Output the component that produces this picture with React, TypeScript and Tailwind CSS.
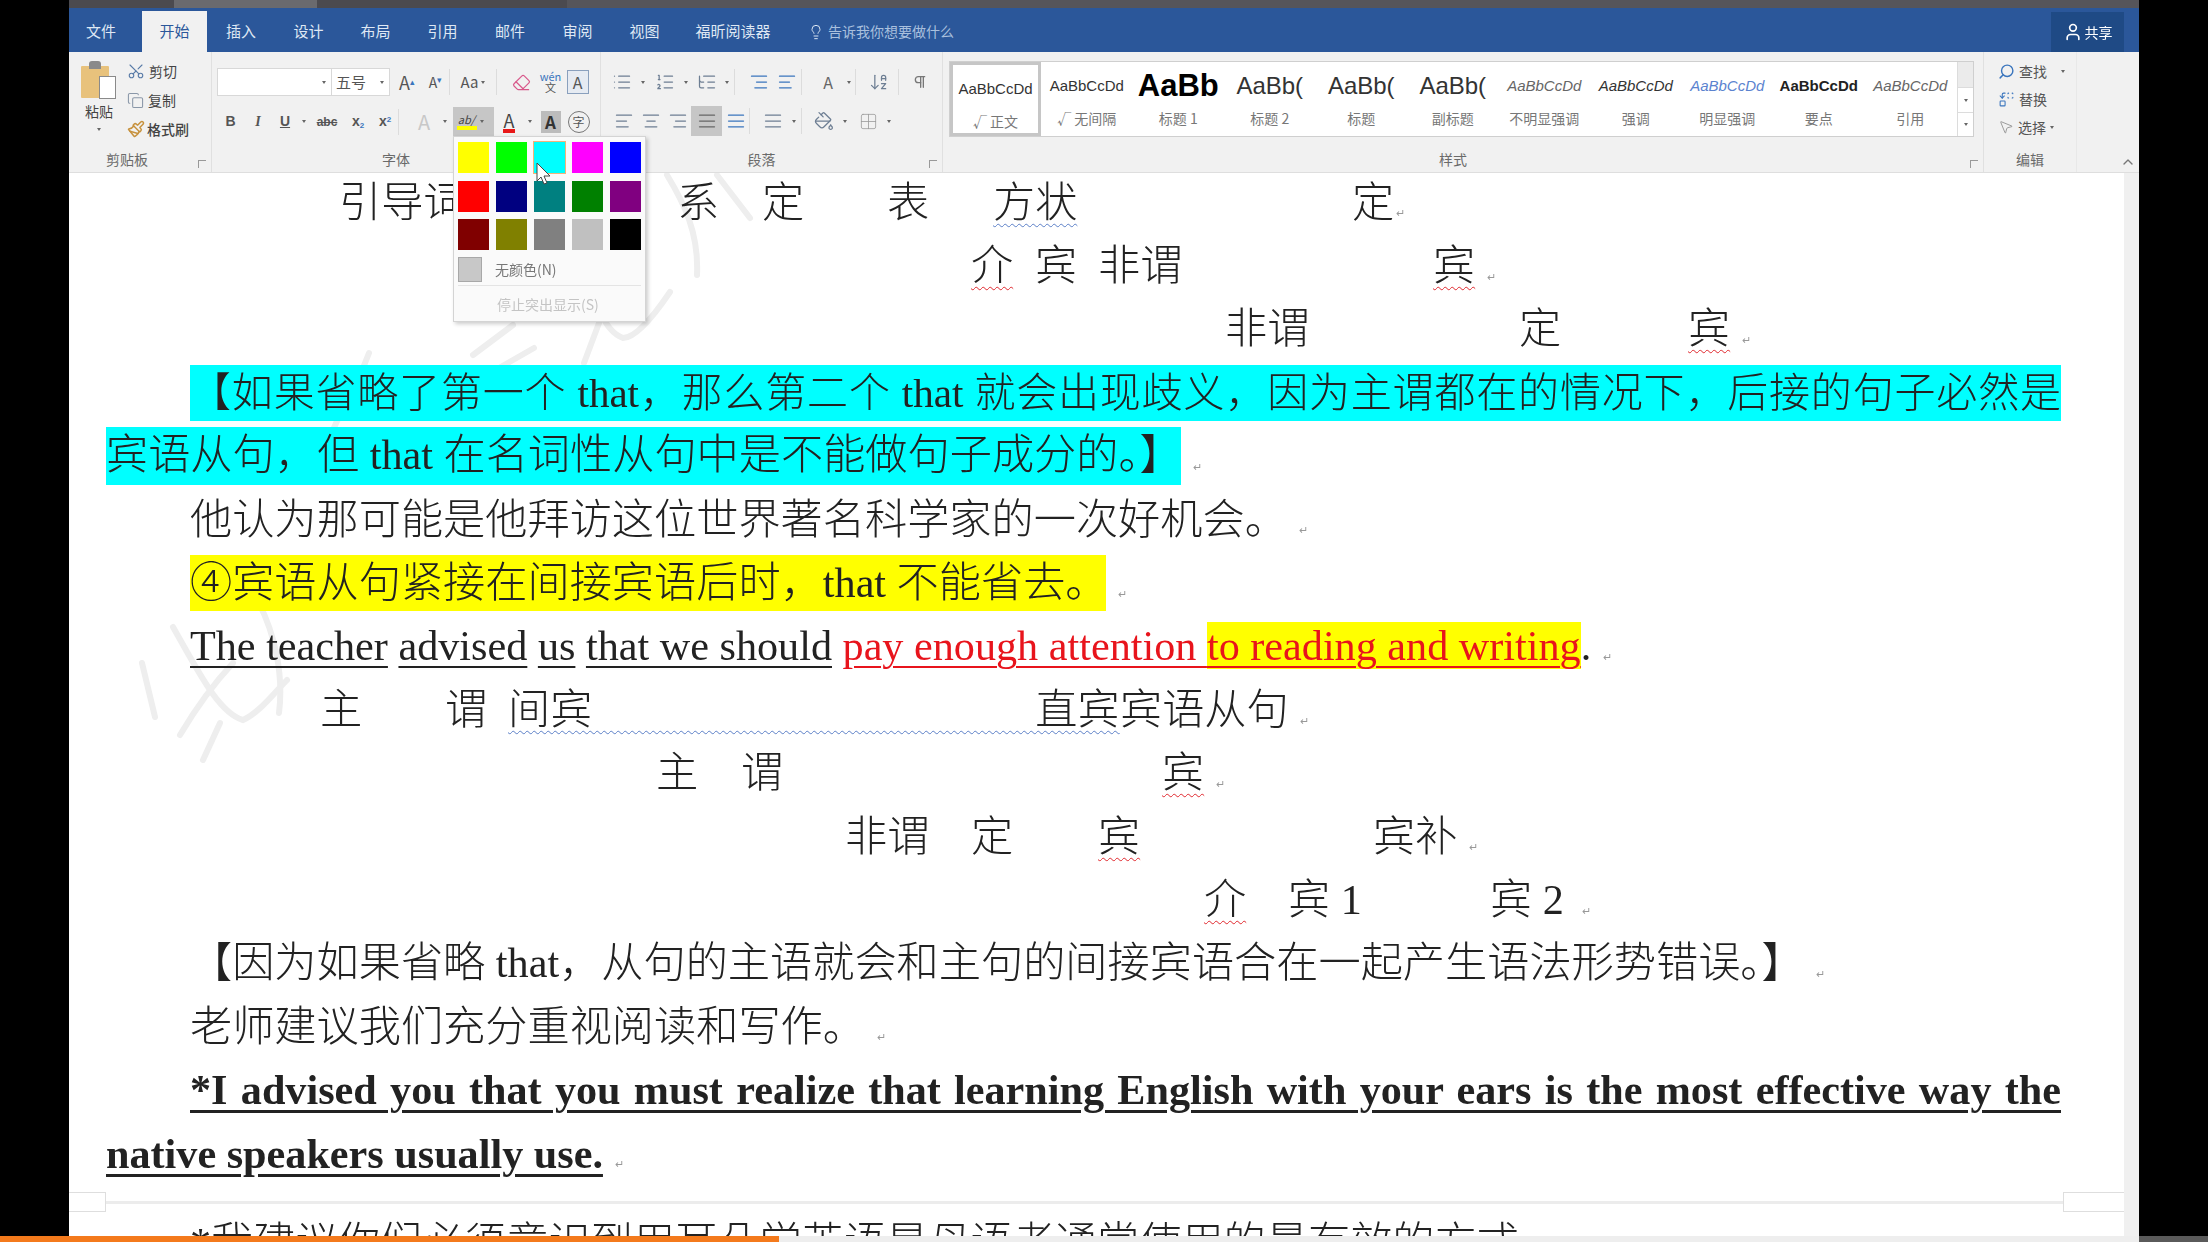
import React from "react";
import { Scissors, Copy, Paintbrush, Search, MousePointer2, ChevronUp, User, Lightbulb, List, ListOrdered, ListTree, AlignLeft, AlignCenter, AlignRight, AlignJustify, ArrowDownAZ, Pilcrow, Grid2x2, PaintBucket, Eraser, Replace } from "lucide-react";

const cjk = "font-['Liberation_Serif','Noto_Sans_CJK_SC',serif]";
const ui = "font-['Noto_Sans_CJK_SC','Liberation_Sans',sans-serif]";

const Caret = () => <span className="block w-0 h-0 border-x-[2.5px] border-x-transparent border-t-[3px] border-t-[#666] shrink-0" />;
const Sep = () => <span className="w-px h-[26px] bg-[#dcdcdc] shrink-0" />;

function Cell({ w, children, className = "" }: { w: string; children?: React.ReactNode; className?: string }) {
  return <div className={`${w} h-[28px] flex items-center justify-center shrink-0 ${className}`}>{children}</div>;
}

function GroupLabel({ children, launcher, className = "" }: { children: React.ReactNode; launcher?: boolean; className?: string }) {
  return (
    <div className={`h-[24px] mt-auto mb-[1px] flex items-center justify-center relative text-[14px] text-[#6a6a6a] ${className}`}>
      {children}
      {launcher && <span className="absolute right-[5px] bottom-[3px] w-[8px] h-[8px] border-l border-t border-[#999]" />}
    </div>
  );
}

const tabs = [["文件", "w-[73px] pr-[9px]"], ["开始", "w-[65px]"], ["插入", "w-[68px]"], ["设计", "w-[67px]"], ["布局", "w-[67px]"], ["引用", "w-[67px]"], ["邮件", "w-[68px]"], ["审阅", "w-[67px]"], ["视图", "w-[67px]"], ["福昕阅读器", "w-[110px]"]];

function TitleBar() {
  return (
    <div className={`h-[44px] bg-[#2b579a] flex items-end text-white text-[15px] ${ui}`}>
      {tabs.map(([t, w]) => (
        <div key={t} className={`${w} h-[41px] flex items-center justify-center ${t === "开始" ? "bg-[#f1f1f1] text-[#2b579a]" : "text-[#dfe8f4]"}`}>{t}</div>
      ))}
      <div className="ml-[20px] h-[41px] flex items-center gap-[4px] text-[14px] text-[#a9c0de]">
        <Lightbulb size={16} strokeWidth={1.5} className="text-[#dbe6f3]" />
        告诉我你想要做什么
      </div>
      <div className="ml-auto mr-[15px] w-[73px] h-[40px] bg-[#1f4a85] flex items-center justify-center gap-[2px] text-[14px]">
        <User size={20} strokeWidth={2} />共享
      </div>
    </div>
  );
}

function Clipboard() {
  return (
    <div className="w-[143px] flex flex-col border-r border-[#e0e0e0]">
      <div className="flex pt-[8px] text-[14px] text-[#444]">
        <div className="w-[58px] flex flex-col items-center pl-[2px] pt-[1px]">
          <div className="relative w-[36px] h-[38px]">
            <div className="absolute left-0 top-[5px] w-[28px] h-[32px] bg-[#e8c27c] rounded-[1px]" />
            <div className="absolute left-[8px] top-0 w-[12px] h-[8px] bg-[#8a8a8a] rounded-t-[3px]" />
            <div className="absolute left-[18px] top-[15px] w-[17px] h-[23px] bg-white border border-[#8a8a8a]" />
          </div>
          <div className="mt-[3px] leading-[18px]">粘贴</div>
          <div className="mt-[8px]"><Caret /></div>
        </div>
        <div className="flex flex-col gap-[9px] pt-[1px]">
          <div className="h-[20px] flex items-center gap-[4px]"><Scissors size={18} className="text-[#5a7ca8] -rotate-90" strokeWidth={1.5} />剪切</div>
          <div className="h-[20px] flex items-center gap-[4px]"><Copy size={17} className="text-[#8a97a8]" strokeWidth={1.5} />复制</div>
          <div className="h-[20px] flex items-center gap-[2px] font-medium"><Paintbrush size={18} className="text-[#c7923e]" strokeWidth={2} />格式刷</div>
        </div>
      </div>
      <GroupLabel launcher className="pr-[26px]">剪贴板</GroupLabel>
    </div>
  );
}

function FontGroup() {
  return (
    <div className="w-[389px] flex flex-col border-r border-[#e0e0e0]">
      <div className="flex items-center h-[28px] mt-[16px] pl-[5px] text-[#555]">
        <div className="w-[115px] h-[28px] bg-white border border-[#d8d8d8] flex items-center justify-end pr-[5px]"><Caret /></div>
        <div className="w-[58px] h-[28px] bg-white border border-[#d8d8d8] border-l-0 flex items-center justify-between pl-[4px] pr-[5px] text-[15px]">五号<Caret /></div>
        <Cell w="w-[30px]" className="text-[18px] ml-[2px]"><span>A<sup className="text-[9px] text-[#3a75bd]">▴</sup></span></Cell>
        <Cell w="w-[27px]" className="text-[14px]"><span>A<sup className="text-[9px] text-[#3a75bd]">▾</sup></span></Cell>
        <Sep />
        <Cell w="w-[46px]" className="text-[15px] gap-[3px]">Aa<Caret /></Cell>
        <Sep />
        <Cell w="w-[32px]" className="ml-[8px]"><Eraser size={19} strokeWidth={1.5} className="text-[#d8588a]" /></Cell>
        <Cell w="w-[27px]" className="text-[11px] leading-[11px] text-center"><span><span className="text-[#3a75bd]">wén</span><br />文</span></Cell>
        <Cell w="w-[27px]"><span className="w-[22px] h-[24px] border border-[#8aa0bd] bg-[#e6ebf2] flex items-center justify-center text-[16px] leading-none">A</span></Cell>
      </div>
      <div className="flex items-center h-[29px] mt-[11px] pl-[5px] text-[#555]">
        <Cell w="w-[27px]" className="font-bold text-[14px] font-['Liberation_Sans']">B</Cell>
        <Cell w="w-[28px]" className="italic font-bold text-[14px] font-['Liberation_Serif']">I</Cell>
        <Cell w="w-[26px]" className="font-bold text-[14px] underline font-['Liberation_Sans']">U</Cell>
        <Cell w="w-[12px]"><Caret /></Cell>
        <Cell w="w-[34px]" className="text-[12px] line-through font-bold font-['Liberation_Sans']">abc</Cell>
        <Cell w="w-[28px]" className="text-[14px] font-bold font-['Liberation_Sans']"><span>x<sub className="text-[8px] text-[#3a75bd]">2</sub></span></Cell>
        <Cell w="w-[26px]" className="text-[14px] font-bold font-['Liberation_Sans']"><span>x<sup className="text-[8px] text-[#3a75bd]">2</sup></span></Cell>
        <Sep />
        <Cell w="w-[24px]" className="text-[20px] text-[#c8c8c8] ml-[13px]">A</Cell>
        <Cell w="w-[17px]"><Caret /></Cell>
        <div className="relative w-[41px] h-[29px] bg-[#c6c6c6] flex items-center shrink-0">
          <div className="w-[27px] flex flex-col items-center">
            <span className="text-[11px] leading-[13px] text-[#444] italic">ab/</span>
            <span className="w-[20px] h-[4px] bg-[#ffff00]" />
          </div>
          <Caret />
          <div className="absolute left-0 top-full w-[193px] h-[186px] bg-[#fafafa] border border-[#d4d4d4] shadow-[2px_2px_4px_rgba(0,0,0,0.2)] z-20 px-[4px] pt-[5px] text-[14px]">
            <div className="grid grid-cols-5 gap-x-[7px] gap-y-[7.5px]">
              {["#ffff00", "#00ff00", "#00ffff", "#ff00ff", "#0000ff", "#ff0000", "#000080", "#008080", "#008000", "#800080", "#800000", "#808000", "#808080", "#c0c0c0", "#000000"].map((c, i) => (
                <div key={c} className={`relative h-[31px] ${i === 2 ? "outline outline-1 outline-[#f2b27a]" : ""}`} style={{ backgroundColor: c }}>
                  {i === 2 && <svg className="absolute left-[2px] top-[20px] z-30" width="16" height="24" viewBox="0 0 16 24"><path d="M1 1v18l4-4 3 7 3-1-3-7h6z" fill="#fff" stroke="#444" strokeWidth="1" /></svg>}
                </div>
              ))}
            </div>
            <div className="flex items-center h-[26px] mt-[6px] text-[#777] gap-[13px]">
              <span className="w-[24px] h-[25px] bg-[#c8c8c8] border border-[#a8a8a8]" />
              无颜色(N)
            </div>
            <div className="h-px bg-[#e4e4e4] mt-[3px]" />
            <div className="pl-[39px] mt-[8px] text-[#c4c4c4] leading-[20px]">停止突出显示(S)</div>
          </div>
        </div>
        <Cell w="w-[30px]"><span className="text-[18px] leading-[18px] border-b-[4px] border-[#e81818] text-[#444] px-[1px]">A</span></Cell>
        <Cell w="w-[12px]"><Caret /></Cell>
        <Cell w="w-[29px]"><span className="w-[20px] h-[22px] bg-[#bcbcbc] text-[#333] flex items-center justify-center text-[17px] font-bold">A</span></Cell>
        <Cell w="w-[27px]"><span className="w-[22px] h-[22px] rounded-full border border-[#777] flex items-center justify-center text-[12px]">字</span></Cell>
      </div>
      <GroupLabel className="pr-[20px]">字体</GroupLabel>
    </div>
  );
}

function ParaGroup() {
  const i = { size: 20, strokeWidth: 1.5, className: "text-[#6d7e93]" };
  return (
    <div className="w-[342px] flex flex-col border-r border-[#e0e0e0]">
      <div className="flex items-center h-[28px] mt-[16px] pl-[9px]">
        <Cell w="w-[24px]"><List {...i} /></Cell><Cell w="w-[18px]"><Caret /></Cell>
        <Cell w="w-[26px]"><ListOrdered {...i} /></Cell><Cell w="w-[16px]"><Caret /></Cell>
        <Cell w="w-[26px]"><ListTree {...i} /></Cell><Cell w="w-[14px]"><Caret /></Cell>
        <Sep />
        <Cell w="w-[28px]" className="ml-[10px]"><AlignRight {...i} className="text-[#3a75bd]" /></Cell>
        <Cell w="w-[28px]"><AlignLeft {...i} className="text-[#3a75bd]" /></Cell>
        <Sep />
        <Cell w="w-[30px]" className="text-[16px] text-[#666] ml-[11px]">A</Cell><Cell w="w-[12px]"><Caret /></Cell>
        <Sep />
        <Cell w="w-[38px]" className="ml-[4px]"><ArrowDownAZ {...i} /></Cell>
        <Sep />
        <Cell w="w-[36px]" className="ml-[3px]"><Pilcrow size={16} className="text-[#777]" /></Cell>
      </div>
      <div className="flex items-center h-[30px] mt-[10px] pl-[9px]">
        <Cell w="w-[27px]"><AlignLeft {...i} /></Cell>
        <Cell w="w-[27px]"><AlignCenter {...i} /></Cell>
        <Cell w="w-[27px]"><AlignRight {...i} /></Cell>
        <Cell w="w-[31px]" className="bg-[#c6c6c6] !h-[30px]"><AlignJustify {...i} className="text-[#666]" /></Cell>
        <Cell w="w-[27px]"><AlignJustify {...i} className="text-[#3a75bd]" /></Cell>
        <Sep />
        <Cell w="w-[28px]" className="ml-[9px]"><AlignJustify {...i} /></Cell><Cell w="w-[14px]"><Caret /></Cell>
        <Sep />
        <Cell w="w-[34px]" className="ml-[5px]"><PaintBucket {...i} /></Cell><Cell w="w-[8px]"><Caret /></Cell>
        <Cell w="w-[30px]" className="ml-[4px]"><Grid2x2 size={19} strokeWidth={1} className="text-[#999]" /></Cell><Cell w="w-[12px]"><Caret /></Cell>
      </div>
      <GroupLabel launcher className="pr-[20px]">段落</GroupLabel>
    </div>
  );
}

const styles: [string, string, string][] = [
  ["AaBbCcDd", "√ 正文", "text-[15px] text-[#333]"],
  ["AaBbCcDd", "√ 无间隔", "text-[15px] text-[#333]"],
  ["AaBb", "标题 1", "text-[31px] font-bold text-black"],
  ["AaBb(", "标题 2", "text-[24px] text-[#333]"],
  ["AaBb(", "标题", "text-[24px] text-[#333]"],
  ["AaBb(", "副标题", "text-[24px] text-[#333]"],
  ["AaBbCcDd", "不明显强调", "text-[15px] italic text-[#666]"],
  ["AaBbCcDd", "强调", "text-[15px] italic text-[#333]"],
  ["AaBbCcDd", "明显强调", "text-[15px] italic text-[#5b83cf]"],
  ["AaBbCcDd", "要点", "text-[15px] font-bold text-[#222]"],
  ["AaBbCcDd", "引用", "text-[15px] italic text-[#666]"],
];

function StylesGroup() {
  return (
    <div className="w-[1041px] flex flex-col border-r border-[#e0e0e0] pl-[6px]">
      <div className="mt-[9px] w-[1025px] h-[76px] bg-white border border-[#cfcfcf] flex">
        <div className="flex-1 flex overflow-hidden">
          {styles.map(([s, l, c], i) => (
            <div key={i} className={`${i === 0 ? "w-[91px] border-[3px] border-[#c6c6c6]" : "w-[91.5px]"} shrink-0 flex flex-col items-center overflow-hidden`}>
              <div className={`h-[44px] mt-[2px] flex items-center whitespace-nowrap font-['Liberation_Sans'] ${c}`}>{s}</div>
              <div className="text-[14px] text-[#777] leading-[20px] whitespace-nowrap">{l}</div>
            </div>
          ))}
        </div>
        <div className="w-[16px] flex flex-col border-l border-[#dcdcdc]">
          <div className="h-[26px] bg-[#ebebeb] border-b border-[#dcdcdc]" />
          <div className="h-[25px] border-b border-[#dcdcdc] flex items-center justify-center"><Caret /></div>
          <div className="flex-1 flex items-center justify-center"><Caret /></div>
        </div>
      </div>
      <GroupLabel launcher className="pr-[26px]">样式</GroupLabel>
    </div>
  );
}

function EditGroup() {
  return (
    <div className="w-[93px] flex flex-col border-r border-[#e8e8e8] text-[14px] text-[#555]">
      <div className="flex flex-col gap-[8px] pl-[14px] pt-[9px]">
        <div className="h-[20px] flex items-center gap-[4px]"><Search size={17} className="text-[#3a75bd] -scale-x-100" strokeWidth={2} />查找<span className="ml-[10px]"><Caret /></span></div>
        <div className="h-[20px] flex items-center gap-[4px]"><Replace size={17} className="text-[#3a75bd]" strokeWidth={1.5} />替换</div>
        <div className="h-[20px] flex items-center gap-[4px]"><MousePointer2 size={16} className="text-[#8a8a8a]" strokeWidth={1.25} />选择<Caret /></div>
      </div>
      <GroupLabel>编辑</GroupLabel>
    </div>
  );
}

function Ribbon() {
  return (
    <div className={`h-[121px] bg-[#f1f1f1] border-b border-[#dedede] flex relative z-10 ${ui}`}>
      <Clipboard />
      <FontGroup />
      <ParaGroup />
      <StylesGroup />
      <EditGroup />
      <div className="flex-1 flex items-end justify-end pr-[3px] pb-[2px]"><ChevronUp size={16} className="text-[#777]" /></div>
    </div>
  );
}

const Mark = () => <span className="font-['DejaVu_Sans'] text-[11px] leading-[12px] text-[#999] ml-[12px] self-end mb-[14px]">↵</span>;

type Item = { x: number; t: string; c?: string };
const WAVY = "underline decoration-wavy decoration-[#e0282e] decoration-1 underline-offset-[6px]";
const BLUE = "underline decoration-wavy decoration-[#5b7fc7] decoration-1 underline-offset-[6px]";

function Labels({ items, end }: { items: Item[]; end: number }) {
  return (
    <div className="h-[63.4px] flex items-center whitespace-pre">
      <div className="shrink-0" style={{ width: items[0].x - 106 }} />
      {items.map((it, i) => (
        <div key={i} className="shrink-0 flex" style={{ width: (i + 1 < items.length ? items[i + 1].x : end) - it.x }}>
          <span className={it.c}>{it.t}</span>
        </div>
      ))}
      <Mark />
    </div>
  );
}

function Plain({ children, indent = true, mark = true }: { children: React.ReactNode; indent?: boolean; mark?: boolean }) {
  return (
    <div className={`h-[63.4px] flex items-center whitespace-pre ${indent ? "pl-[84px]" : ""}`}>
      <span>{children}</span>
      {mark && <Mark />}
    </div>
  );
}

function Watermark() {
  return (
    <svg className="absolute left-0 top-0 pointer-events-none" width="2070" height="1100" viewBox="0 0 2070 1100" fill="none" stroke="#eeeeee" strokeWidth="6" strokeLinecap="round">
      <path d="M73 490 L86 544 M104 454 C130 500 150 540 174 547 C190 540 205 520 218 507 M111 562 C130 530 150 505 164 490 M151 550 L134 587" />
      <path d="M598 2 C615 30 630 60 628 102 M648 2 L681 45 M601 119 C580 150 565 165 554 165 C540 160 535 145 528 135 M444 152 L404 182 M465 175 L430 195 M515 190 L530 150" />
      <path d="M190 430 C205 460 215 500 210 540 M300 180 C285 220 270 240 262 262" />
    </svg>
  );
}

const UL = "underline decoration-2 underline-offset-[6px]";
const ULB = "font-bold underline decoration-[3px] underline-offset-[6px]";

function Doc() {
  return (
    <div className="flex-1 flex min-h-0 overflow-hidden">
      <div className={`flex-1 bg-white relative overflow-hidden ${cjk} text-[42.2px] leading-[56px] text-[#222] font-light`}>
        <Watermark />
        <div className="relative px-[37px] -mt-[2px]">
          <div className="w-[1955px]">
            <Labels end={1384} items={[{ x: 339, t: "引导词" }, { x: 677, t: "系" }, { x: 762, t: "定" }, { x: 887, t: "表" }, { x: 993, t: "方状", c: BLUE }, { x: 1352, t: "定" }]} />
            <Labels end={1475} items={[{ x: 971, t: "介", c: WAVY }, { x: 1035, t: "宾" }, { x: 1098, t: "非谓" }, { x: 1433, t: "宾", c: WAVY }]} />
            <Labels end={1730} items={[{ x: 1225, t: "非谓" }, { x: 1519, t: "定" }, { x: 1688, t: "宾", c: WAVY }]} />
            <div className="h-[63.4px] flex items-center pl-[84px]">
              <div className="flex-1 bg-[#00ffff] text-[41px] whitespace-nowrap text-justify [text-align-last:justify]">【如果省略了第一个 that，那么第二个 that 就会出现歧义，因为主谓都在的情况下，后接的句子必然是</div>
            </div>
            <div className="h-[63.4px] flex items-center whitespace-pre">
              <span className="bg-[#00ffff] h-[58px] w-[1075px] inline-block">宾语从句，但 that 在名词性从句中是不能做句子成分的。】</span>
              <Mark />
            </div>
            <Plain>他认为那可能是他拜访这位世界著名科学家的一次好机会。</Plain>
            <div className="h-[63.4px] flex items-center whitespace-pre pl-[84px]">
              <span className="bg-[#ffff00] h-[56px] w-[916px] inline-block">④宾语从句紧接在间接宾语后时，that 不能省去。</span>
              <Mark />
            </div>
            <Plain>
              <span className={UL}>The teacher</span> <span className={UL}>advised</span> <span className={UL}>us</span> <span className={UL}>that we should</span> <span className={`text-[#e8141c] ${UL}`}>pay enough attention </span><span className={`text-[#e8141c] bg-[#ffff00] ${UL}`}>to reading and writing</span>.
            </Plain>
            <Labels end={1288} items={[{ x: 320, t: "主" }, { x: 445, t: "谓" }, { x: 508, t: "间宾" + " ".repeat(42) + "直宾", c: BLUE }, { x: 1120, t: "宾语从句" }]} />
            <Labels end={1204} items={[{ x: 656, t: "主" }, { x: 741, t: "谓" }, { x: 1162, t: "宾", c: WAVY }]} />
            <Labels end={1457} items={[{ x: 845, t: "非谓" }, { x: 971, t: "定" }, { x: 1098, t: "宾", c: WAVY }, { x: 1373, t: "宾补" }]} />
            <Labels end={1570} items={[{ x: 1204, t: "介", c: WAVY }, { x: 1288, t: "宾 1" }, { x: 1490, t: "宾 2" }]} />
            <Plain>【因为如果省略 that，从句的主语就会和主句的间接宾语合在一起产生语法形势错误。】</Plain>
            <Plain>老师建议我们充分重视阅读和写作。</Plain>
            <div className="h-[63.4px] flex items-center pl-[84px]">
              <div className={`flex-1 text-justify [text-align-last:justify] ${ULB}`}>*I advised you that you must realize that learning English with your ears is the most effective way the</div>
            </div>
            <Plain indent={false}>
              <span className={ULB}>native speakers usually use.</span>
            </Plain>
          </div>
        </div>
        <div className="h-[20px] mt-[7px] relative flex items-center">
          <div className="w-[37px] h-full border-y border-r border-[#dedede] shrink-0" />
          <div className="flex-1 h-[3px] bg-[#ececec]" />
          <div className="w-[61px] h-full border-y border-l border-[#dedede] shrink-0" />
        </div>
        <div className="pl-[121px] whitespace-pre mt-[3px]">*我建议你们必须意识到用耳朵学英语是母语者通常使用的最有效的方式。</div>
      </div>
      <div className="w-[15px] bg-[#f0f0f0] shrink-0" />
    </div>
  );
}

export default function App() {
  return (
    <div className="w-[2208px] h-[1242px] flex flex-col overflow-hidden bg-black">
      <div className="flex h-[1236px]">
        <div className="w-[69px] shrink-0" />
        <div className="flex-1 flex flex-col min-w-0 blur-[0.5px]">
          <div className="h-[8px] bg-[#4b4a4f] flex shrink-0">
            <div className="w-[105px]" />
            <div className="w-[143px] bg-[#6a6a6e]" />
            <div className="w-[250px]" />
            <div className="flex-1 bg-[#56555a]" />
          </div>
          <TitleBar />
          <Ribbon />
          <Doc />
        </div>
        <div className="w-[69px] shrink-0" />
      </div>
      <div className="h-[6px] flex shrink-0">
        <div className="w-[779px] bg-[#f47a1c]" />
        <div className="w-[1360px] bg-[#eeeeee]" />
        <div className="flex-1 bg-[#5a5a5a]" />
      </div>
    </div>
  );
}
